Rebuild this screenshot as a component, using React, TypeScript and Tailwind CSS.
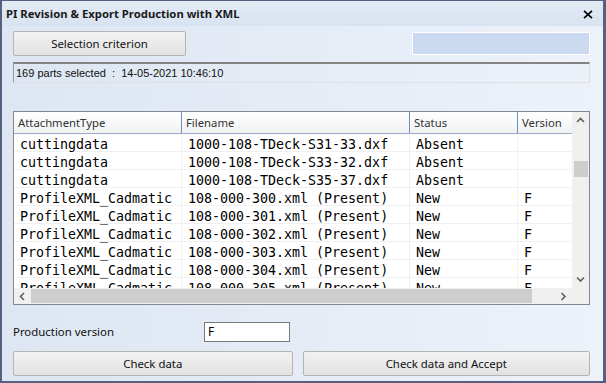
import React from "react";

const rows = [
  { type: "cuttingdata", file: "1000-108-TDeck-S31-33.dxf", status: "Absent", version: "" },
  { type: "cuttingdata", file: "1000-108-TDeck-S33-32.dxf", status: "Absent", version: "" },
  { type: "cuttingdata", file: "1000-108-TDeck-S35-37.dxf", status: "Absent", version: "" },
  { type: "ProfileXML_Cadmatic", file: "108-000-300.xml (Present)", status: "New", version: "F" },
  { type: "ProfileXML_Cadmatic", file: "108-000-301.xml (Present)", status: "New", version: "F" },
  { type: "ProfileXML_Cadmatic", file: "108-000-302.xml (Present)", status: "New", version: "F" },
  { type: "ProfileXML_Cadmatic", file: "108-000-303.xml (Present)", status: "New", version: "F" },
  { type: "ProfileXML_Cadmatic", file: "108-000-304.xml (Present)", status: "New", version: "F" },
  { type: "ProfileXML_Cadmatic", file: "108-000-305.xml (Present)", status: "New", version: "F" },
];

const ui = { fontFamily: '"Noto Sans", "Open Sans", sans-serif' };
const mono = { fontFamily: '"DejaVu Sans Mono", "Liberation Mono", monospace' };

function Chevron({ dir }: { dir: "up" | "down" | "left" | "right" }) {
  const d = {
    up: "M1 5 L4.5 1.5 L8 5",
    down: "M1 1.5 L4.5 5 L8 1.5",
    left: "M5 1 L1.5 4.5 L5 8",
    right: "M1.5 1 L5 4.5 L1.5 8",
  }[dir];
  const vertical = dir === "up" || dir === "down";
  return (
    <svg width={vertical ? 9 : 7} height={vertical ? 7 : 9} viewBox={vertical ? "0 0 9 7" : "0 0 7 9"}>
      <path d={d} fill="none" stroke="#606060" strokeWidth="1.6" />
    </svg>
  );
}

function WinButton({ label, className }: { label: string; className: string }) {
  return (
    <div
      className={`flex h-[25px] items-center justify-center rounded-[2px] border border-[#b4b4b4] bg-linear-to-b from-[#f2f2f2] to-[#e2e2e2] text-[11.4px] text-[#111] ${className}`}
      style={ui}
    >
      {label}
    </div>
  );
}

export default function App() {
  return (
    <div className="flex h-[383px] w-[606px] flex-col bg-[#56607f] pt-px pr-[3px] pb-[2px] pl-[2px]">
      {/* title bar */}
      <div className="flex h-[25px] items-center justify-between bg-linear-to-b from-[#e3ebf6] to-[#d8e3f1] pl-[4px] pr-[10px] pt-[2px]">
        <span className="text-[11.3px] font-bold text-[#1a1a1a]" style={ui}>
          PI Revision &amp; Export Production with XML
        </span>
        <svg width="10" height="9" viewBox="0 0 10 9">
          <path d="M1 0.8 L9 8.2 M9 0.8 L1 8.2" stroke="#000" strokeWidth="1.7" />
        </svg>
      </div>

      {/* body */}
      <div className="flex flex-1 flex-col bg-linear-to-r from-[#dde6f2] to-[#edf2fa] pl-[11px] pr-[13px]">
        <div className="mt-[5px] flex items-center justify-between">
          <WinButton label="Selection criterion" className="w-[173px] h-[25px]" />
          <div className="h-[23px] w-[178px] border border-white bg-[#cbdaf0]" />
        </div>

        <div
          className="mt-[6px] flex h-[21px] items-center border-t-2 border-l border-r border-b border-t-[#838383] border-l-[#9a9a9a] border-r-[#e0e0e0] border-b-[#e0e0e0] pl-[2px] text-[11px] text-[#111] whitespace-pre"
          style={{ fontFamily: '"Liberation Sans", Arial, sans-serif' }}
        >
          {"169 parts selected  :  14-05-2021 10:46:10"}
        </div>

        {/* grid */}
        <div className="mt-[28px] flex h-[194px] w-[577px] flex-col border border-[#828790] bg-white">
          <div className="flex h-[176px]">
            <div className="w-[558px] overflow-hidden">
              <div
                className="grid h-[22px] grid-cols-[168px_228px_108px_54px] bg-linear-to-b from-[#ffffff] to-[#f1f2f4] border-b border-[#9aabc8] text-[11.3px] text-[#333]"
                style={ui}
              >
                {["AttachmentType", "Filename", "Status", "Version"].map((h, i) => (
                  <div
                    key={h}
                    className={`flex items-center pl-[4px] pt-[2px] ${i < 3 ? "border-r border-[#6f8fc0]" : ""}`}
                  >
                    {h}
                  </div>
                ))}
              </div>
              {rows.map((r, i) => (
                <div
                  key={i}
                  className="grid h-[18px] grid-cols-[168px_228px_108px_54px] border-b border-[#f0f0f0] text-[13.3px] leading-[21px] text-black"
                  style={mono}
                >
                  <div className="border-r border-[#f0f0f0] pl-[6px]">{r.type}</div>
                  <div className="border-r border-[#f0f0f0] pl-[6px] whitespace-pre">{r.file}</div>
                  <div className="border-r border-[#f0f0f0] pl-[6px]">{r.status}</div>
                  <div className="pl-[6px]">{r.version}</div>
                </div>
              ))}
            </div>
            {/* vertical scrollbar */}
            <div className="flex w-[17px] flex-col items-center bg-[#f0f0f0]">
              <div className="flex h-[17px] items-center justify-center">
                <Chevron dir="up" />
              </div>
              <div className="mt-[32px] h-[16px] w-[14px] bg-[#cdcdcd]" />
              <div className="flex-1" />
              <div className="flex h-[17px] items-center justify-center">
                <Chevron dir="down" />
              </div>
            </div>
          </div>
          {/* horizontal scrollbar */}
          <div className="flex h-[16px] bg-[#f0f0f0]">
            <div className="flex w-[17px] items-center justify-center">
              <Chevron dir="left" />
            </div>
            <div className="my-[1px] w-[501px] bg-[#cdcdcd]" />
            <div className="flex-1" />
            <div className="flex w-[17px] items-center justify-center">
              <Chevron dir="right" />
            </div>
            <div className="w-[17px]" />
          </div>
        </div>

        <div className="mt-[16px] flex h-[21px] items-center">
          <span className="w-[191px] text-[11.4px] text-[#111]" style={ui}>
            Production version
          </span>
          <div
            className="flex h-[20px] w-[86px] items-center border border-[#7a7a7a] bg-white pl-[3px] text-[12px] text-black"
            style={ui}
          >
            F
          </div>
        </div>

        <div className="mt-[9px] flex gap-[10px]">
          <WinButton label="Check data" className="w-[280px]" />
          <WinButton label="Check data and Accept" className="w-[288px]" />
        </div>
      </div>
    </div>
  );
}
